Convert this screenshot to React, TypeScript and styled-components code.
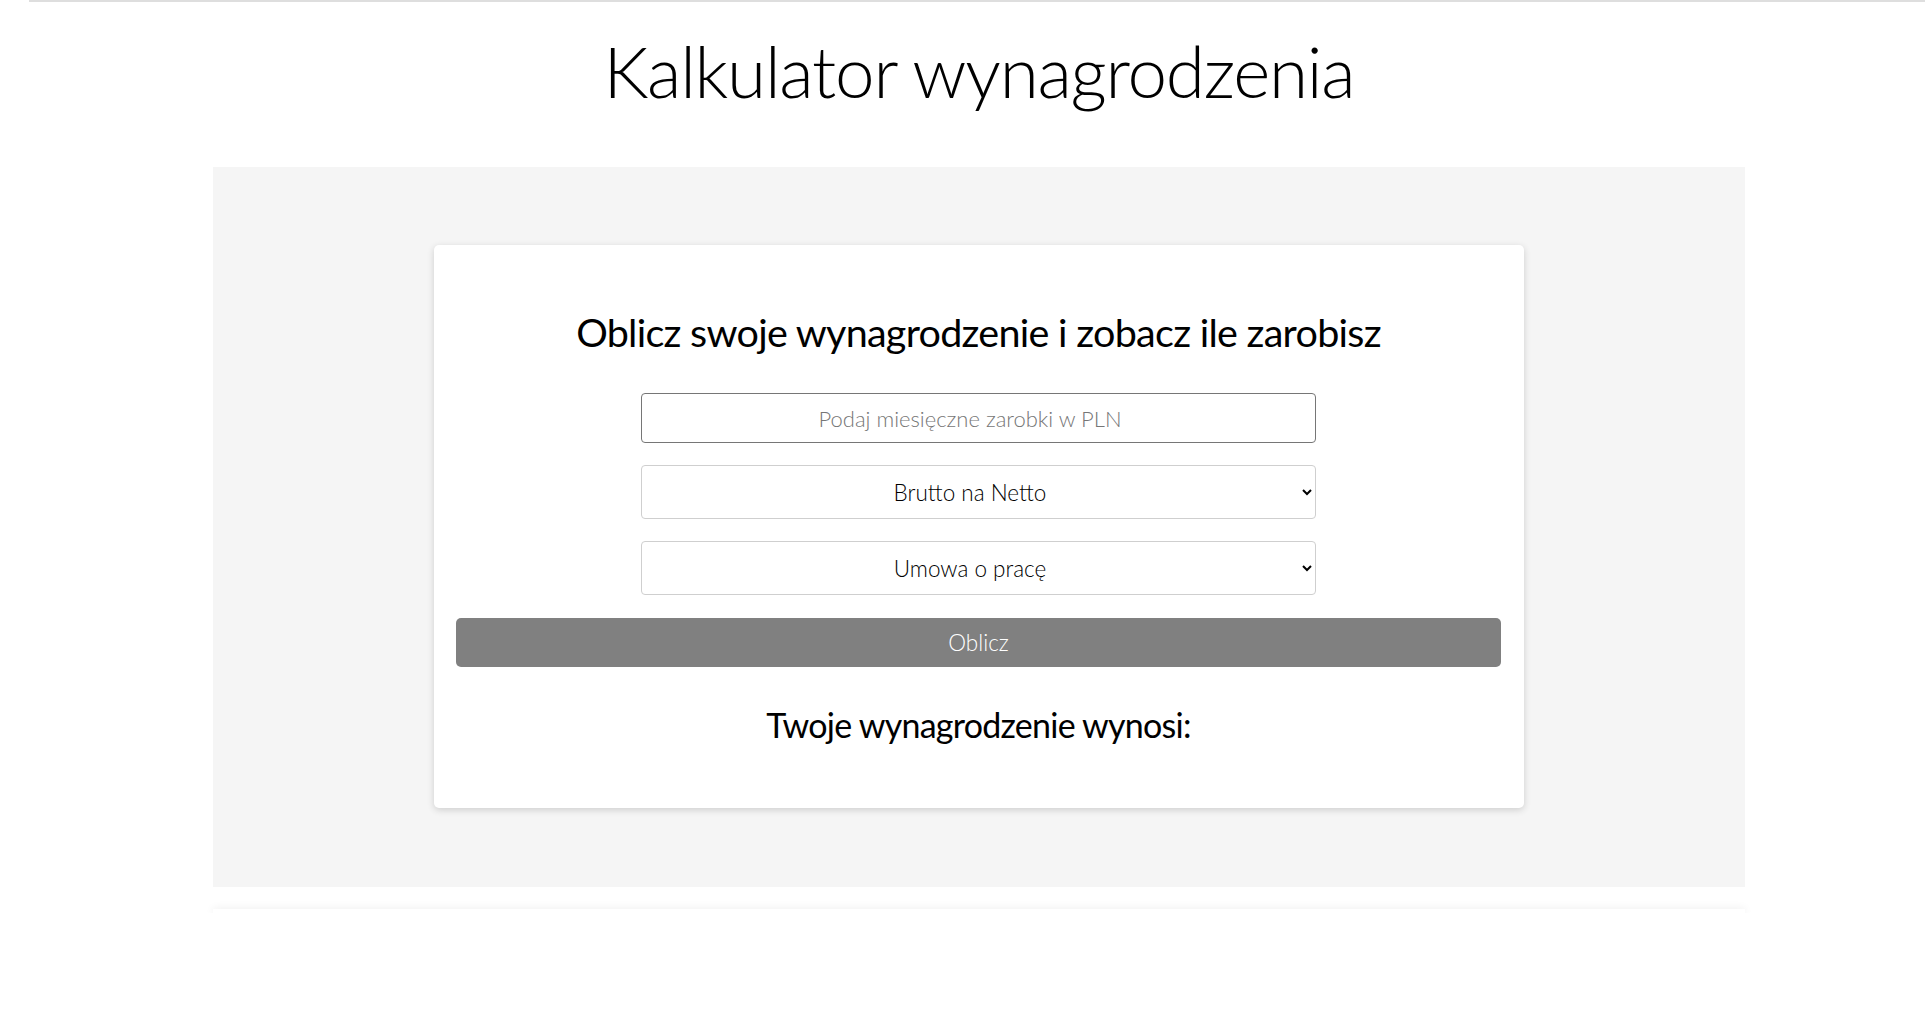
import React from "react";
import styled, { createGlobalStyle } from "styled-components";

const GlobalStyle = createGlobalStyle`
  html, body {
    margin: 0;
    padding: 0;
    background: #ffffff;
    overflow: hidden;
  }
  body {
    font-family: Lato, "Open Sans", Arial, sans-serif;
    color: #000;
  }
  * { box-sizing: border-box; }
`;

const Page = styled.div`
  margin-left: 22px;
  width: 1914px;
  display: flex;
  flex-direction: column;
  align-items: center;
`;

const TopBar = styled.div`
  align-self: stretch;
  margin-left: 7px;
  height: 2px;
  background: #dedede;
`;

const Title = styled.h1`
  margin: 26px 0 53px;
  font-family: Lato, sans-serif;
  font-weight: 300;
  font-size: 71px;
  letter-spacing: -1.25px;
  line-height: 86px;
  color: #000;
`;

const Panel = styled.section`
  width: 80%;
  background: #f5f5f5;
  display: flex;
  justify-content: center;
  padding: 78px 0 79px;
`;

const Card = styled.div`
  width: 1090px;
  background: #fff;
  border-radius: 5px;
  box-shadow: 0 2px 7px rgba(0, 0, 0, 0.16);
  padding: 63px 23px 62px 22px;
  display: flex;
  flex-direction: column;
  align-items: center;
`;

const Heading = styled.h2`
  margin: 0 0 37px;
  font-family: Lato, sans-serif;
  font-weight: 400;
  font-size: 39.5px;
  letter-spacing: -0.72px;
  line-height: 48px;
  color: #000;
`;

const Form = styled.form`
  display: flex;
  flex-direction: column;
  align-items: center;
  align-self: stretch;
  gap: 22px;
`;

const AmountInput = styled.input`
  width: 675px;
  height: 50px;
  border: 1px solid #767676;
  border-radius: 4px;
  background: #fff;
  font-family: Lato, sans-serif;
  font-weight: 300;
  font-size: 22px;
  text-align: center;
  padding: 0 17px 0 0;
  outline: none;
  &::placeholder {
    color: #767676;
  }
`;

const Select = styled.select`
  width: 675px;
  height: 54px;
  padding: 0 5px 0 0;
  border: 1px solid #cfcfcf;
  border-radius: 4px;
  background: #fff;
  font-family: Lato, sans-serif;
  font-weight: 300;
  font-size: 22.5px;
  color: #000;
  text-align: center;
  text-align-last: center;
  outline: none;
`;

const SubmitButton = styled.button`
  align-self: stretch;
  margin-top: 1px;
  height: 49px;
  border: none;
  border-radius: 5px;
  background: #808080;
  color: #fff;
  font-family: Lato, sans-serif;
  font-weight: 300;
  font-size: 22.5px;
  cursor: pointer;
`;

const Result = styled.h3`
  margin: 37px 0 0;
  font-family: Lato, sans-serif;
  font-weight: 400;
  font-size: 34px;
  letter-spacing: -0.75px;
  line-height: 42px;
  color: #000;
`;

const Footer = styled.footer`
  width: 80%;
  margin-top: 22px;
  height: 4px;
  background: #fff;
  box-shadow: 0 0 8px rgba(0, 0, 0, 0.1);
  clip-path: inset(-12px -20px 0 -20px);
`;

export default function App() {
  return (
    <>
      <GlobalStyle />
      <Page>
        <TopBar />
        <Title>Kalkulator wynagrodzenia</Title>
        <Panel>
          <Card>
            <Heading>Oblicz swoje wynagrodzenie i zobacz ile zarobisz</Heading>
            <Form onSubmit={(e) => e.preventDefault()}>
              <AmountInput type="text" inputMode="decimal" placeholder="Podaj miesięczne zarobki w PLN" />
              <Select defaultValue="bn">
                <option value="bn">Brutto na Netto</option>
                <option value="nb">Netto na Brutto</option>
              </Select>
              <Select defaultValue="up">
                <option value="up">Umowa o pracę</option>
                <option value="uz">Umowa zlecenie</option>
                <option value="ud">Umowa o dzieło</option>
              </Select>
              <SubmitButton type="submit">Oblicz</SubmitButton>
            </Form>
            <Result>Twoje wynagrodzenie wynosi:</Result>
          </Card>
        </Panel>
        <Footer />
      </Page>
    </>
  );
}
